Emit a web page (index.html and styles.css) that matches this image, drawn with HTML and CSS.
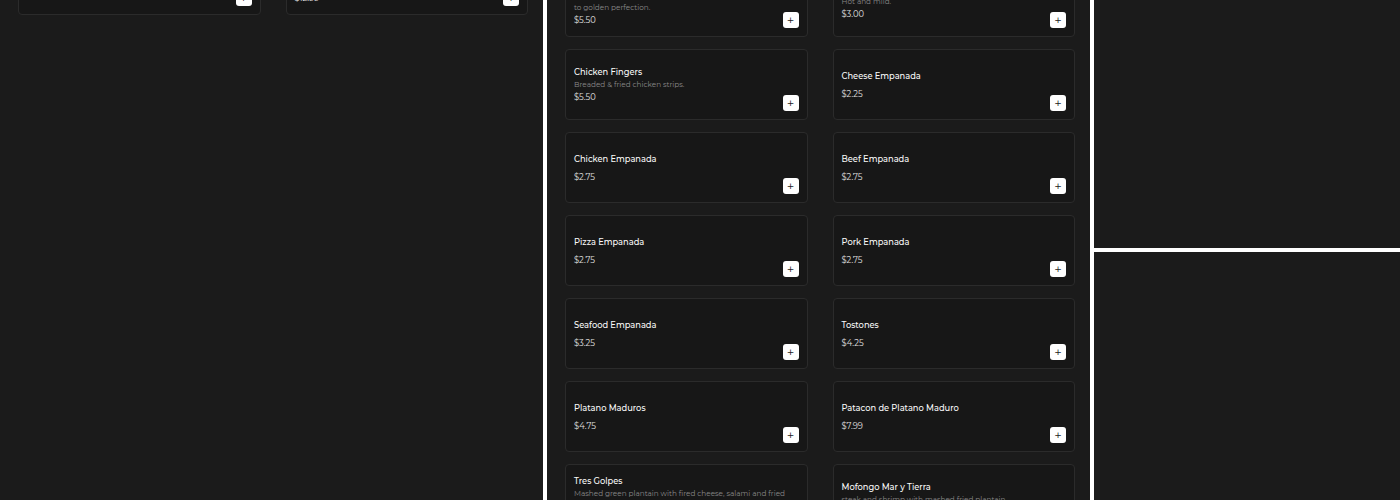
FILE: index.html
```html
<!DOCTYPE html>
<html>

<head>
  <title>Menu</title>
  <link rel="stylesheet" href="styles.css">
</head>

<body>
  <div class="layout">
    <!-- left column -->
    <section class="menu-col" id="left-col">
      <div class="menu-grid">
        <div class="card">
          <h3 class="item-title">Bistec Encebollado</h3>
          <p class="item-price">$11.99</p>
          <button class="add-btn">+</button>
        </div>
        <div class="card">
          <h3 class="item-title">Pernil Asado</h3>
          <p class="item-desc">Slow roasted pork shoulder served with white rice, red beans and sweet plantains on the side.</p>
          <p class="item-price">$12.99</p>
          <button class="add-btn">+</button>
        </div>
      </div>
    </section>

    <!-- middle column -->
    <section class="menu-col" id="middle-col">
      <div class="menu-grid" id="menu-list"></div>
    </section>

    <!-- right column -->
    <aside class="side">
      <div class="side-panel"></div>
      <div class="side-panel"></div>
    </aside>
  </div>

  <script>
    const items = [
      { name: "Papas Rellenas", desc: "Potato balls stuffed with spiced ground beef & cheese, fried to golden perfection.", price: "$5.50" },
      { name: "Chicken Wings", desc: "Hot and mild.", price: "$3.00" },
      { name: "Chicken Fingers", desc: "Breaded & fried chicken strips.", price: "$5.50" },
      { name: "Cheese Empanada", price: "$2.25" },
      { name: "Chicken Empanada", price: "$2.75" },
      { name: "Beef Empanada", price: "$2.75" },
      { name: "Pizza Empanada", price: "$2.75" },
      { name: "Pork Empanada", price: "$2.75" },
      { name: "Seafood Empanada", price: "$3.25" },
      { name: "Tostones", price: "$4.25" },
      { name: "Platano Maduros", price: "$4.75" },
      { name: "Patacon de Platano Maduro", price: "$7.99" },
      { name: "Tres Golpes", desc: "Mashed green plantain with fired cheese, salami and fried eggs.", price: "$13.99" },
      { name: "Mofongo Mar y Tierra", desc: "steak and shrimp with mashed fried plantain", price: "$18.99" }
    ];

    const menuList = document.getElementById("menu-list");

    items.forEach((item) => {
      const card = document.createElement("div");
      card.classList.add("card");
      card.innerHTML = `
        <h3 class="item-title">${item.name}</h3>
        ${item.desc ? `<p class="item-desc">${item.desc}</p>` : ""}
        <p class="item-price">${item.price}</p>
        <button class="add-btn">+</button>
      `;
      menuList.appendChild(card);
    });

    document.getElementById("left-col").scrollTop = 74;
    document.getElementById("middle-col").scrollTop = 52;
  </script>
</body>

</html>
```

FILE: styles.css
```css
html,
body {
  margin: 0;
  padding: 0;
}

body {
  background-color: #fff;
  font-family: "Montserrat", "Lato", sans-serif;
}

.layout {
  display: grid;
  grid-template-columns: 543px 543px 1fr;
  column-gap: 4px;
  height: 100vh;
}

.menu-col {
  background-color: #1b1b1b;
  overflow-y: auto;
  scrollbar-width: none;
}

.menu-col::-webkit-scrollbar {
  display: none;
}

.menu-grid {
  display: grid;
  grid-template-columns: 1fr 1fr;
  grid-auto-rows: 71px;
  column-gap: 25px;
  row-gap: 12px;
  padding: 18px 15px 100vh 18px;
}

.card {
  position: relative;
  box-sizing: border-box;
  display: flex;
  flex-direction: column;
  justify-content: center;
  background-color: #171717;
  border: 1px solid #2b2b2b;
  border-radius: 4px;
  padding: 8px;
}

.item-title {
  margin: 0;
  font-size: 8.3px;
  font-weight: 500;
  line-height: 12px;
  color: #fafafa;
}

.item-desc {
  margin: 1px 0 0;
  font-size: 7.3px;
  line-height: 12px;
  color: #8a8a8a;
}

.item-price {
  margin: 0;
  font-size: 8.3px;
  line-height: 12px;
  color: #e2e2e2;
}

.item-title + .item-price {
  margin-top: 6px;
}

.add-btn {
  position: absolute;
  right: 8px;
  bottom: 8px;
  width: 16px;
  height: 16px;
  padding: 0;
  border: none;
  border-radius: 3px;
  background-color: #fff;
  color: #222;
  font-family: "DejaVu Sans", sans-serif;
  font-size: 9px;
  line-height: 16px;
  cursor: pointer;
}

.side {
  display: flex;
  flex-direction: column;
  gap: 4px;
}

.side-panel {
  flex: 1;
  background-color: #1b1b1b;
}
```
